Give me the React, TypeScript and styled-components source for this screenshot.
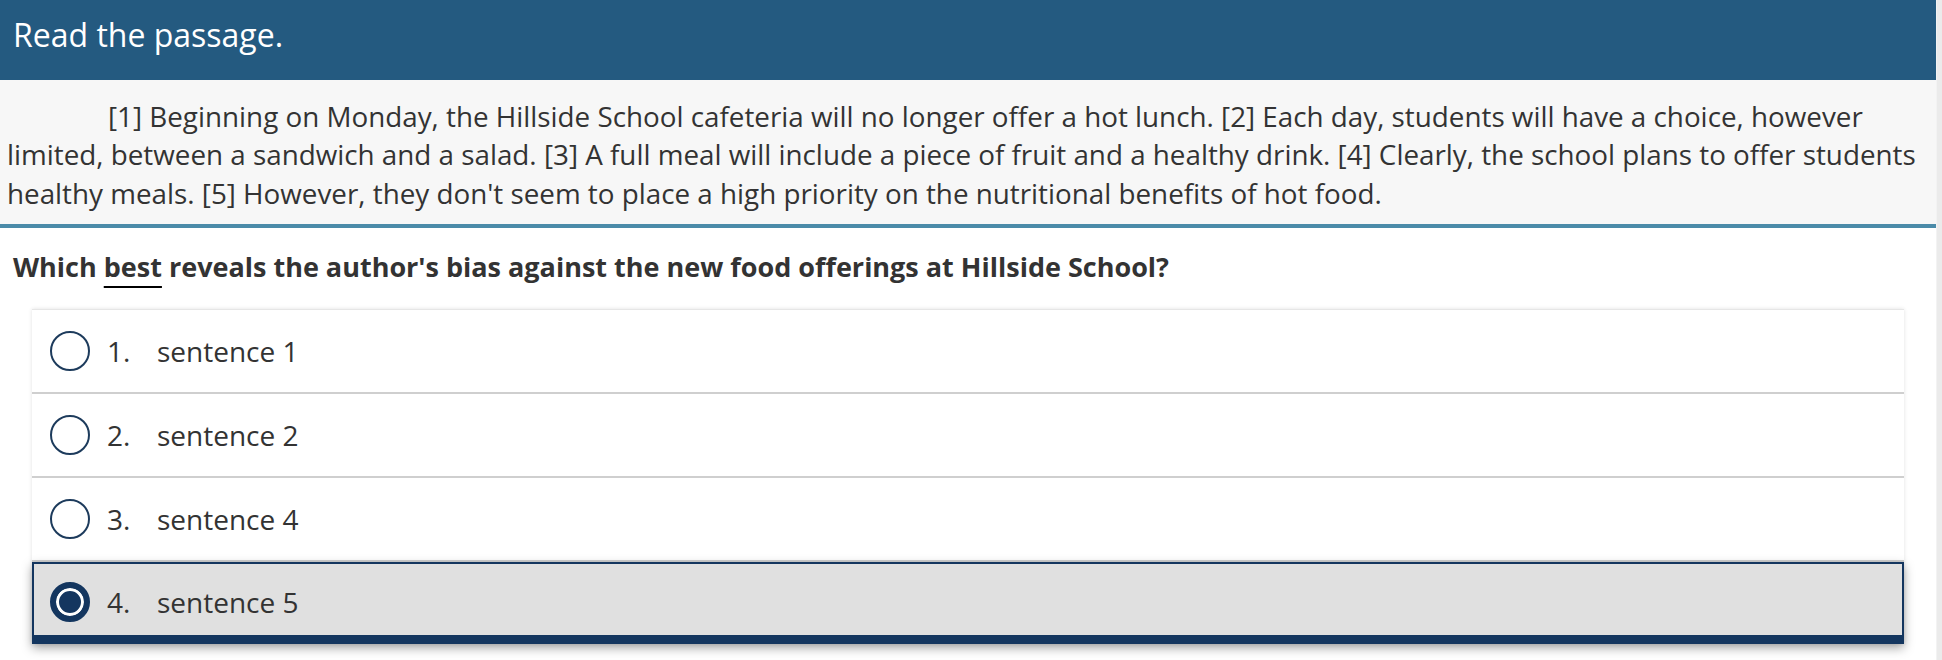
import React, { useState } from 'react';
import styled, { createGlobalStyle, css } from 'styled-components';

const GlobalStyle = createGlobalStyle`
  html, body {
    margin: 0;
    padding: 0;
    background: #ffffff;
  }
  body {
    font-family: "Open Sans", "Noto Sans", sans-serif;
    color: #333333;
  }
`;

const Shell = styled.div`
  display: flex;
  width: 1942px;
  min-height: 660px;
`;

const Content = styled.div`
  flex: 1;
  display: flex;
  flex-direction: column;
`;

const ScrollTrack = styled.div`
  width: 5px;
  flex-shrink: 0;
  border-left: 1px solid #f3f3f3;
  background: #ebebeb;
`;

const Header = styled.div`
  display: flex;
  align-items: center;
  box-sizing: border-box;
  height: 80px;
  padding: 0 0 11px 13px;
  background: #245a80;
  color: #ffffff;
  font-size: 32px;
`;

const Passage = styled.div`
  padding: 16.5px 2px 11.5px 7px;
  background: #f7f7f7;
  border-bottom: 4px solid #4b8ba9;
  font-size: 27.8px;
  line-height: 38.5px;
  text-indent: 101px;
`;

const Question = styled.div`
  padding: 21px 13px 0 13px;
  font-size: 27px;
  font-weight: 700;
  line-height: 36px;
`;

const Emphasis = styled.span`
  text-decoration: underline;
  text-decoration-color: #000000;
  text-decoration-thickness: 2px;
  text-underline-offset: 9px;
`;

const Choices = styled.div`
  margin: 24px 0 0 32px;
  width: 1872px;
  border-top: 1px solid #e6e6e6;
  box-shadow: 0 0 4px rgba(0, 0, 0, 0.12);
`;

const Choice = styled.div<{ selected?: boolean }>`
  display: flex;
  align-items: center;
  height: 82px;
  padding-left: 18px;
  background: #ffffff;
  border-bottom: 2px solid #cfcfcf;
  font-size: 28px;
  cursor: pointer;

  ${(props) => props.selected && css`
    height: 66px;
    padding-top: 5px;
    padding-left: 16px;
    background: #e0e0e0;
    border: 2px solid #14365f;
    border-bottom-width: 9px;
    box-shadow: 0 4px 10px rgba(0, 0, 0, 0.35);
    position: relative;
  `}
`;

const Radio = styled.span<{ checked?: boolean }>`
  box-sizing: border-box;
  width: 40px;
  height: 40px;
  flex-shrink: 0;
  border-radius: 50%;
  border: 2px solid #1d3b5c;
  background: #ffffff;

  ${(props) => props.checked && css`
    border: 6px solid #14365f;
    background: #14365f;
    box-shadow: inset 0 0 0 3px #ffffff;
  `}
`;

const Number = styled.span`
  width: 50px;
  margin-left: 17px;
`;

const Label = styled.span``;

const choices = ['sentence 1', 'sentence 2', 'sentence 4', 'sentence 5'];

export default function App() {
  const [selected, setSelected] = useState(3);

  return (
    <Shell>
      <GlobalStyle />
      <Content>
        <Header>Read the passage.</Header>
        <Passage>
          [1] Beginning on Monday, the Hillside School cafeteria will no longer offer a hot lunch. [2] Each day, students will have a choice, however limited, between a sandwich and a salad. [3] A full meal will include a piece of fruit and a healthy drink. [4] Clearly, the school plans to offer students healthy meals. [5] However, they don't seem to place a high priority on the nutritional benefits of hot food.
        </Passage>
        <Question>
          Which <Emphasis>best</Emphasis> reveals the author's bias against the new food offerings at Hillside School?
        </Question>
        <Choices>
          {choices.map((text, i) => (
            <Choice key={text} selected={selected === i} onClick={() => setSelected(i)}>
              <Radio checked={selected === i} />
              <Number>{i + 1}.</Number>
              <Label>{text}</Label>
            </Choice>
          ))}
        </Choices>
      </Content>
      <ScrollTrack />
    </Shell>
  );
}
